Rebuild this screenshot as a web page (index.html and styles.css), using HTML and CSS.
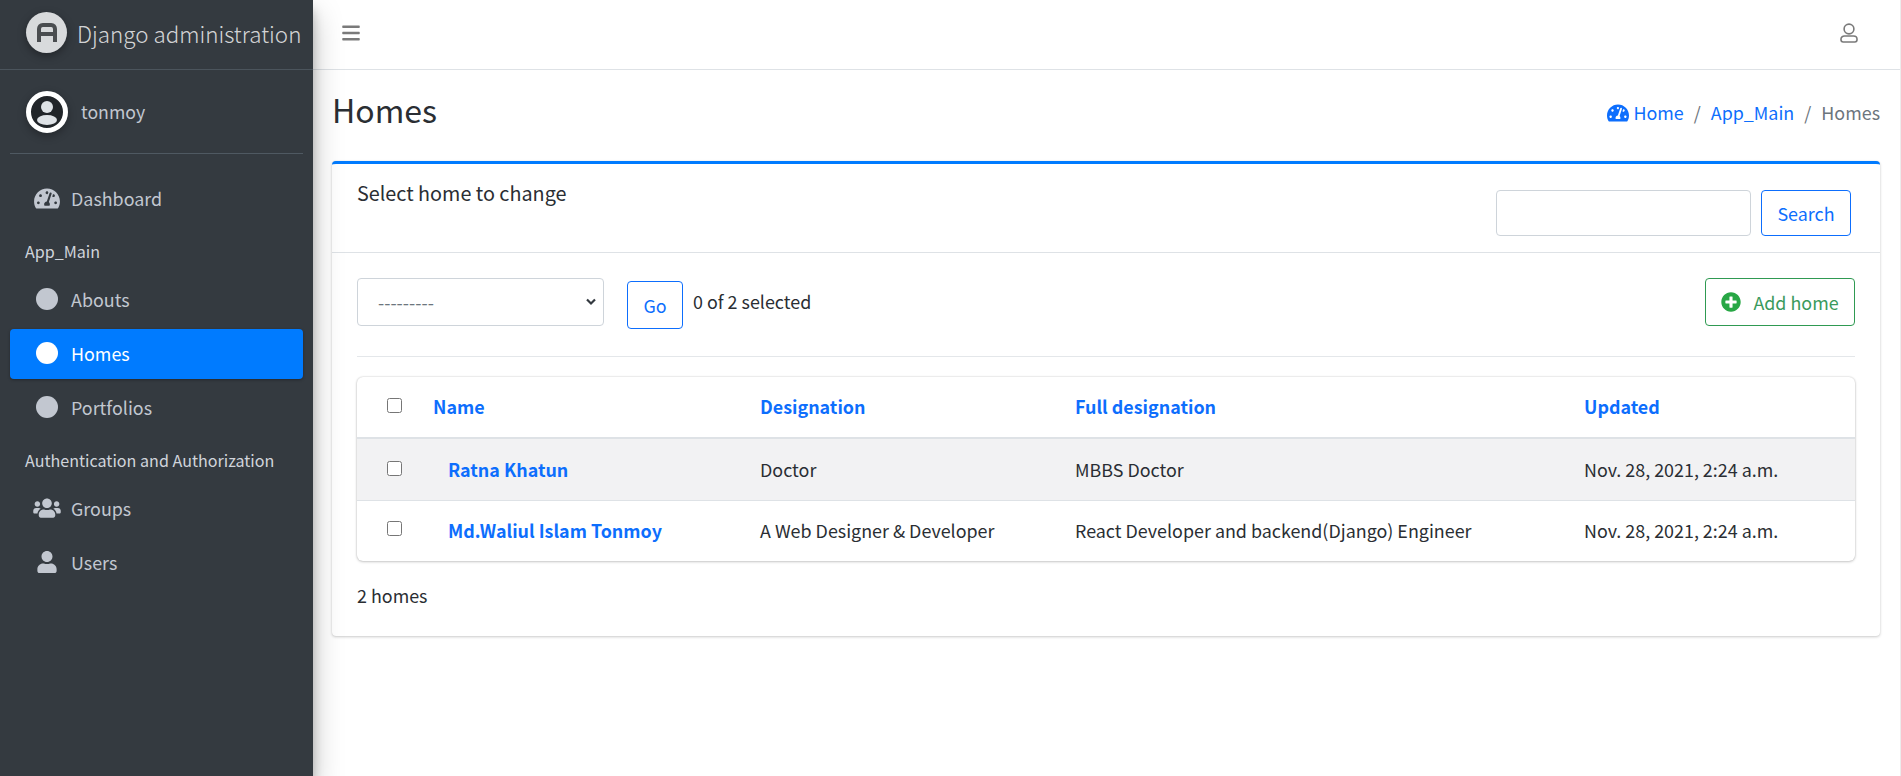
FILE: index.html
```html
<!DOCTYPE html>
<html lang="en">
<head>
	<meta charset="UTF-8" />
	<title>Homes</title>
	<link rel="stylesheet" href="styles.css">
</head>
<body>
	<div class="wrapper">
		<aside class="side_bar">
			<div class="brand">
				<span class="brand_logo">
					<svg viewBox="0 0 20 19" width="20" height="19"><path d="M2 19V6C2 3.800 3.500 2 5.800 2h8.400C16.500 2 18 3.800 18 6v13M2 11h16" fill="none" stroke="#4a4d50" stroke-width="4"/></svg>
				</span>
				<span class="brand_text">Django administration</span>
			</div>
			<div class="user_panel">
				<span class="user_avatar">
					<svg viewBox="0 0 42 42" width="42" height="42">
						<circle cx="21" cy="21" r="18.500" fill="#212529" stroke="#fff" stroke-width="5"/>
						<circle cx="21" cy="16" r="6" fill="#dee2e6"/>
						<ellipse cx="21" cy="29" rx="10" ry="5" fill="#dee2e6"/>
					</svg>
				</span>
				<span class="user_name">tonmoy</span>
			</div>
			<nav class="side_nav">
				<a class="nav_item" href="#">
					<span class="nav_icon"><svg viewBox="0 0 576 512" width="26" height="23"><path d="M288 32C128.94 32 0 160.94 0 320c0 52.8 14.25 102.26 39.06 144.8 5.61 9.62 16.3 15.2 27.44 15.2h443c11.14 0 21.83-5.58 27.44-15.2C561.75 422.26 576 372.8 576 320c0-159.06-128.94-288-288-288zm0 64c14.71 0 26.58 10.13 30.32 23.65-1.11 2.26-2.64 4.23-3.45 6.67l-9.22 27.67c-5.13 3.49-10.97 6.01-17.64 6.01-17.67 0-32-14.33-32-32S270.33 96 288 96zM96 384c-17.67 0-32-14.33-32-32s14.33-32 32-32 32 14.33 32 32-14.33 32-32 32zm48-160c-17.67 0-32-14.33-32-32s14.33-32 32-32 32 14.33 32 32-14.33 32-32 32zm246.77-72.41l-61.33 184C343.13 347.33 352 364.54 352 384c0 11.72-3.38 22.55-8.88 32H232.88c-5.5-9.45-8.88-20.28-8.88-32 0-33.94 26.5-61.43 59.9-63.59l61.34-184.01c4.17-12.56 17.73-19.45 30.36-15.17 12.57 4.19 19.35 17.79 15.17 30.36zm14.66 57.2l15.52-46.55c3.47-1.29 7.13-2.23 11.05-2.23 17.67 0 32 14.33 32 32s-14.33 32-32 32c-11.38-.01-20.89-6.28-26.57-15.22zM480 384c-17.67 0-32-14.33-32-32s14.33-32 32-32 32 14.33 32 32-14.33 32-32 32z"/></svg></span>
					<span>Dashboard</span>
				</a>
				<div class="nav_header">App_Main</div>
				<a class="nav_item" href="#"><span class="nav_icon"><i class="nav_dot"></i></span><span>Abouts</span></a>
				<a class="nav_item nav_active" href="#"><span class="nav_icon"><i class="nav_dot"></i></span><span>Homes</span></a>
				<a class="nav_item" href="#"><span class="nav_icon"><i class="nav_dot"></i></span><span>Portfolios</span></a>
				<div class="nav_header">Authentication and Authorization</div>
				<a class="nav_item" href="#">
					<span class="nav_icon"><svg viewBox="0 0 640 512" width="28" height="22"><path d="M96 224c35.3 0 64-28.700 64-64s-28.700-64-64-64-64 28.700-64 64 28.700 64 64 64zm448 0c35.300 0 64-28.700 64-64s-28.700-64-64-64-64 28.700-64 64 28.700 64 64 64zm32 32h-64c-17.600 0-33.500 7.100-45.100 18.600 40.300 22.100 68.900 62 75.100 109.400h66c17.700 0 32-14.300 32-32v-32c0-35.300-28.700-64-64-64zm-256 0c61.900 0 112-50.100 112-112S381.900 32 320 32 208 82.100 208 144s50.100 112 112 112zm76.800 32h-8.300c-20.800 10-43.900 16-68.500 16s-47.600-6-68.500-16h-8.300C179.600 288 128 339.600 128 403.200V432c0 26.500 21.500 48 48 48h288c26.500 0 48-21.500 48-48v-28.800c0-63.600-51.600-115.200-115.200-115.200zm-223.700-13.400C161.500 263.100 145.600 256 128 256H64c-35.300 0-64 28.700-64 64v32c0 17.700 14.300 32 32 32h65.900c6.300-47.400 34.900-87.300 75.200-109.400z"/></svg></span>
					<span>Groups</span>
				</a>
				<a class="nav_item" href="#">
					<span class="nav_icon"><svg viewBox="0 0 448 512" width="20" height="22"><path d="M224 256c70.700 0 128-57.300 128-128S294.700 0 224 0 96 57.300 96 128s57.300 128 128 128zm89.600 32h-16.700c-22.200 10.200-46.900 16-72.900 16s-50.600-5.800-72.900-16h-16.700C60.200 288 0 348.200 0 422.400V464c0 26.500 21.500 48 48 48h352c26.500 0 48-21.500 48-48v-41.600c0-74.200-60.200-134.400-134.400-134.400z"/></svg></span>
					<span>Users</span>
				</a>
			</nav>
		</aside>

		<div class="main_wrap">
			<header class="top_bar">
				<a class="top_link" href="#">
					<svg viewBox="0 0 448 512" width="18" height="20"><path d="M16 126h416c8.837 0 16-7.163 16-16V82c0-8.837-7.163-16-16-16H16C7.163 66 0 73.163 0 82v28c0 8.837 7.163 16 16 16zm0 160h416c8.837 0 16-7.163 16-16v-28c0-8.837-7.163-16-16-16H16c-8.837 0-16 7.163-16 16v28c0 8.837 7.163 16 16 16zm0 160h416c8.837 0 16-7.163 16-16v-28c0-8.837-7.163-16-16-16H16c-8.837 0-16 7.163-16 16v28c0 8.837 7.163 16 16 16z"/></svg>
				</a>
				<a class="top_link" href="#">
					<svg viewBox="0 0 18 20" width="18" height="20"><circle cx="9" cy="6" r="4.900" fill="none" stroke="#7a7a7a" stroke-width="1.600"/><path d="M4.500 13h9c2 0 3.500 1.300 3.500 3v.8c0 1.200-1 2.200-2.200 2.200H3.200C2 19 1 18 1 16.800V16c0-1.700 1.500-3 3.500-3z" fill="none" stroke="#7a7a7a" stroke-width="1.600"/></svg>
				</a>
			</header>

			<div class="page_head">
				<h1 class="page_title">Homes</h1>
				<ol class="crumbs">
					<li><a href="#"><svg class="crumb_icon" viewBox="0 0 576 512" width="22" height="20"><path d="M288 32C128.940 32 0 160.940 0 320c0 52.800 14.250 102.260 39.060 144.800 5.610 9.620 16.300 15.200 27.440 15.200h443c11.140 0 21.830-5.580 27.440-15.200C561.750 422.260 576 372.800 576 320c0-159.060-128.940-288-288-288zm0 64c14.710 0 26.580 10.130 30.320 23.650-1.110 2.260-2.640 4.230-3.450 6.670l-9.220 27.670c-5.130 3.490-10.970 6.010-17.640 6.010-17.670 0-32-14.330-32-32S270.330 96 288 96zM96 384c-17.670 0-32-14.330-32-32s14.330-32 32-32 32 14.330 32 32-14.330 32-32 32zm48-160c-17.670 0-32-14.330-32-32s14.330-32 32-32 32 14.330 32 32-14.330 32-32 32zm246.770-72.410l-61.330 184C343.130 347.330 352 364.540 352 384c0 11.720-3.380 22.550-8.880 32H232.880c-5.500-9.450-8.880-20.280-8.880-32 0-33.940 26.500-61.430 59.900-63.590l61.340-184.010c4.170-12.560 17.730-19.450 30.360-15.170 12.570 4.190 19.350 17.790 15.170 30.360zm14.660 57.200l15.520-46.550c3.470-1.290 7.130-2.230 11.050-2.230 17.670 0 32 14.330 32 32s-14.330 32-32 32c-11.380-.010-20.890-6.280-26.570-15.220zM480 384c-17.670 0-32-14.330-32-32s14.330-32 32-32 32 14.330 32 32-14.330 32-32 32z"/></svg> Home</a></li>
					<li class="crumb_sep">/</li>
					<li><a href="#">App_Main</a></li>
					<li class="crumb_sep">/</li>
					<li class="crumb_now">Homes</li>
				</ol>
			</div>

			<section class="card">
				<div class="card_head">
					<h2 class="card_title">Select home to change</h2>
					<form class="search_form">
						<input class="search_input" type="text" />
						<button class="btn_line search_btn" type="button">Search</button>
					</form>
				</div>
				<div class="card_body">
					<div class="action_row">
						<select class="action_select"><option>---------</option></select>
						<button class="btn_line go_btn" type="button">Go</button>
						<span class="action_count">0 of 2 selected</span>
						<a class="add_btn" href="#">
							<svg viewBox="0 0 512 512" width="20" height="20"><path d="M256 8C119 8 8 119 8 256s111 248 248 248 248-111 248-248S393 8 256 8zm144 276c0 6.600-5.400 12-12 12h-92v92c0 6.600-5.400 12-12 12h-56c-6.600 0-12-5.400-12-12v-92h-92c-6.600 0-12-5.400-12-12v-56c0-6.600 5.400-12 12-12h92v-92c0-6.600 5.400-12 12-12h56c6.600 0 12 5.400 12 12v92h92c6.600 0 12 5.400 12 12v56z"/></svg>
							Add home
						</a>
					</div>
					<table class="list_table">
						<thead>
							<tr>
								<th class="col_check"><input type="checkbox" /></th>
								<th class="col_name"><a href="#">Name</a></th>
								<th class="col_desig"><a href="#">Designation</a></th>
								<th class="col_full"><a href="#">Full designation</a></th>
								<th><a href="#">Updated</a></th>
							</tr>
						</thead>
						<tbody>
							<tr class="row_odd">
								<td class="col_check"><input type="checkbox" /></td>
								<td class="cell_name"><a href="#">Ratna Khatun</a></td>
								<td>Doctor</td>
								<td>MBBS Doctor</td>
								<td>Nov. 28, 2021, 2:24 a.m.</td>
							</tr>
							<tr class="row_even">
								<td class="col_check"><input type="checkbox" /></td>
								<td class="cell_name"><a href="#">Md.Waliul Islam Tonmoy</a></td>
								<td>A Web Designer &amp; Developer</td>
								<td>React Developer and backend(Django) Engineer</td>
								<td>Nov. 28, 2021, 2:24 a.m.</td>
							</tr>
						</tbody>
					</table>
					<p class="list_count">2 homes</p>
				</div>
			</section>
		</div>
	</div>
</body>
</html>
```
FILE: styles.css
```css
* { margin: 0; padding: 0; box-sizing: border-box; }
a { text-decoration: none; }
html, body { height: 100%; overflow: hidden; }
body {
	background: #fff;
	color: #2a2e33;
	font-family: "Noto Sans CJK SC", "Open Sans", sans-serif;
	font-size: 17.900px;
	line-height: 28px;
}
.wrapper { display: flex; height: 776px; }

/* sidebar */
.side_bar {
	width: 313px;
	flex: none;
	background: #343a40;
	color: #c2c7d0;
	box-shadow: 0 14px 28px rgba(0,0,0,.25), 0 10px 10px rgba(0,0,0,.22);
	position: relative;
	z-index: 2;
}
.brand {
	height: 70px;
	display: flex;
	align-items: center;
	padding: 0 0 4px 26px;
	border-bottom: 1px solid #4b545c;
}
.brand_logo {
	width: 41px;
	height: 41px;
	flex: none;
	border-radius: 50%;
	background: #d8dadc;
	display: flex;
	align-items: center;
	justify-content: center;
	box-shadow: 0 3px 8px rgba(0,0,0,.35);
}
.brand_text {
	margin-left: 10px;
	font-size: 22.400px;
	font-weight: 300;
	color: rgba(255,255,255,.8);
	white-space: nowrap;
}
.user_panel {
	margin: 0 10px;
	height: 84px;
	padding: 0 0 0 16px;
	display: flex;
	align-items: center;
	border-bottom: 1px solid #4f5962;
}
.user_avatar { height: 42px; border-radius: 50%; box-shadow: 0 3px 8px rgba(0,0,0,.3); }
.user_name { margin: 0 0 2px 13px; font-size: 17.700px; }

.side_nav { padding: 20px 10px 0; }
.nav_item {
	height: 50px;
	margin-bottom: 4px;
	display: flex;
	align-items: center;
	padding: 0 0 2px 24px;
	border-radius: 4px;
	color: #c2c7d0;
}
.nav_icon {
	width: 26px;
	height: 26px;
	margin-right: 11px;
	display: flex;
	align-items: center;
	justify-content: center;
}
.nav_icon svg { fill: #c2c7d0; flex: none; }
.nav_dot {
	display: block;
	width: 22px;
	height: 22px;
	border-radius: 50%;
	background: #c2c7d0;
}
.nav_active {
	background: #007bff;
	color: #fff;
	box-shadow: 0 1px 3px rgba(0,0,0,.3);
}
.nav_active .nav_dot { background: #fff; }
.nav_header {
	height: 47px;
	padding-left: 15px;
	font-size: 16.100px;
	line-height: 47px;
	color: #d0d4db;
}

/* main */
.main_wrap { flex: 1; min-width: 0; border-right: 1px solid #ececec; }
.top_bar {
	height: 70px;
	display: flex;
	align-items: center;
	justify-content: space-between;
	padding: 0 42px 4px 29px;
	border-bottom: 1px solid #dee2e6;
}
.top_link { display: flex; }
.top_link svg { fill: #7a7a7a; }

.page_head {
	display: flex;
	align-items: center;
	justify-content: space-between;
	height: 91px;
	padding: 0 20px 10px 19px;
}
.page_title { font-size: 32px; font-weight: 400; line-height: 44px; margin-bottom: 4px; }
.crumbs { display: flex; list-style: none; align-items: center; margin-top: 2px; }
.crumbs a { color: #0d6efd; }
.crumb_icon { fill: #0d6efd; vertical-align: -3px; }
.crumb_sep { margin: 0 10px; color: #6c757d; }
.crumb_now { color: #6c757d; }

.card {
	margin: 0 20px 0 19px;
	height: 475px;
	border-top: 3px solid #007bff;
	border-radius: 4px;
	background: #fff;
	box-shadow: 0 0 1px rgba(0,0,0,.125), 0 1px 3px rgba(0,0,0,.2);
}
.card_head {
	height: 89px;
	padding: 15px 29px 0 25px;
	display: flex;
	justify-content: space-between;
	border-bottom: 1px solid #dee2e6;
}
.card_title { font-size: 19.800px; font-weight: 400; line-height: 28px; }
.search_form { display: flex; gap: 10px; padding-top: 11px; }
.search_input {
	width: 255px;
	height: 46px;
	border: 1px solid #ced4da;
	border-radius: 4px;
}
.btn_line {
	border: 1px solid #0d6efd;
	border-radius: 4px;
	background: #fff;
	color: #0d6efd;
	font: inherit;
}
.search_btn { width: 90px; height: 46px; }

.card_body { padding: 25px 25px 0; }
.action_row {
	display: flex;
	align-items: flex-start;
	height: 79px;
	border-bottom: 1px solid #e4e7ea;
}
.action_select {
	appearance: none;
	width: 247px;
	height: 48px;
	padding-left: 20px;
	border: 1px solid #ced4da;
	border-radius: 4px;
	background: #fff url("data:image/svg+xml,%3Csvg xmlns='http://www.w3.org/2000/svg' width='10' height='8'%3E%3Cpath d='M1 1.500l4 4 4-4' fill='none' stroke='%23343a40' stroke-width='2.200'/%3E%3C/svg%3E") no-repeat right 7px center;
	color: #6c757d;
	font: inherit;
}
.go_btn { width: 56px; height: 48px; margin: 3px 0 0 23px; }
.action_count { margin-left: 10px; line-height: 47px; }
.add_btn {
	margin-left: auto;
	width: 150px;
	height: 48px;
	display: flex;
	align-items: center;
	justify-content: center;
	gap: 12px;
	border: 1px solid #2f9a52;
	border-radius: 4px;
	color: #3a9a5c;
}
.add_btn svg { fill: #28a745; }

.list_table {
	width: 100%;
	margin-top: 20px;
	table-layout: fixed;
	border-collapse: collapse;
	border-radius: 6px;
	box-shadow: 0 0 2px rgba(0,0,0,.2), 0 1px 3px rgba(0,0,0,.18);
}
.list_table th {
	height: 61px;
	padding: 0 15px 2px;
	text-align: left;
	font-weight: 700;
	border-bottom: 2px solid #dee2e6;
}
.list_table td {
	height: 61px;
	padding: 0 15px;
	border-top: 1px solid #dee2e6;
}
.list_table .row_odd td { height: 62px; }
.list_table .row_even td { padding-bottom: 2px; }
.list_table a { color: #0d6efd; }
.list_table input { width: 15px; height: 15px; vertical-align: 2px; }
.col_check { width: 61px; }
.col_name { width: 327px; }
.col_desig { width: 315px; }
.col_full { width: 509px; }
.list_table th.col_check { padding: 0 0 0 30px; }
.list_table td.col_check { padding: 2px 0 0 30px; }
.list_table .row_even td.col_check { padding: 0 0 2px 30px; }
.cell_name { font-weight: 700; }
.list_table td.cell_name { padding-left: 30px; }
.row_odd { background: #f2f2f3; }
.list_count { margin-top: 20px; }
```
